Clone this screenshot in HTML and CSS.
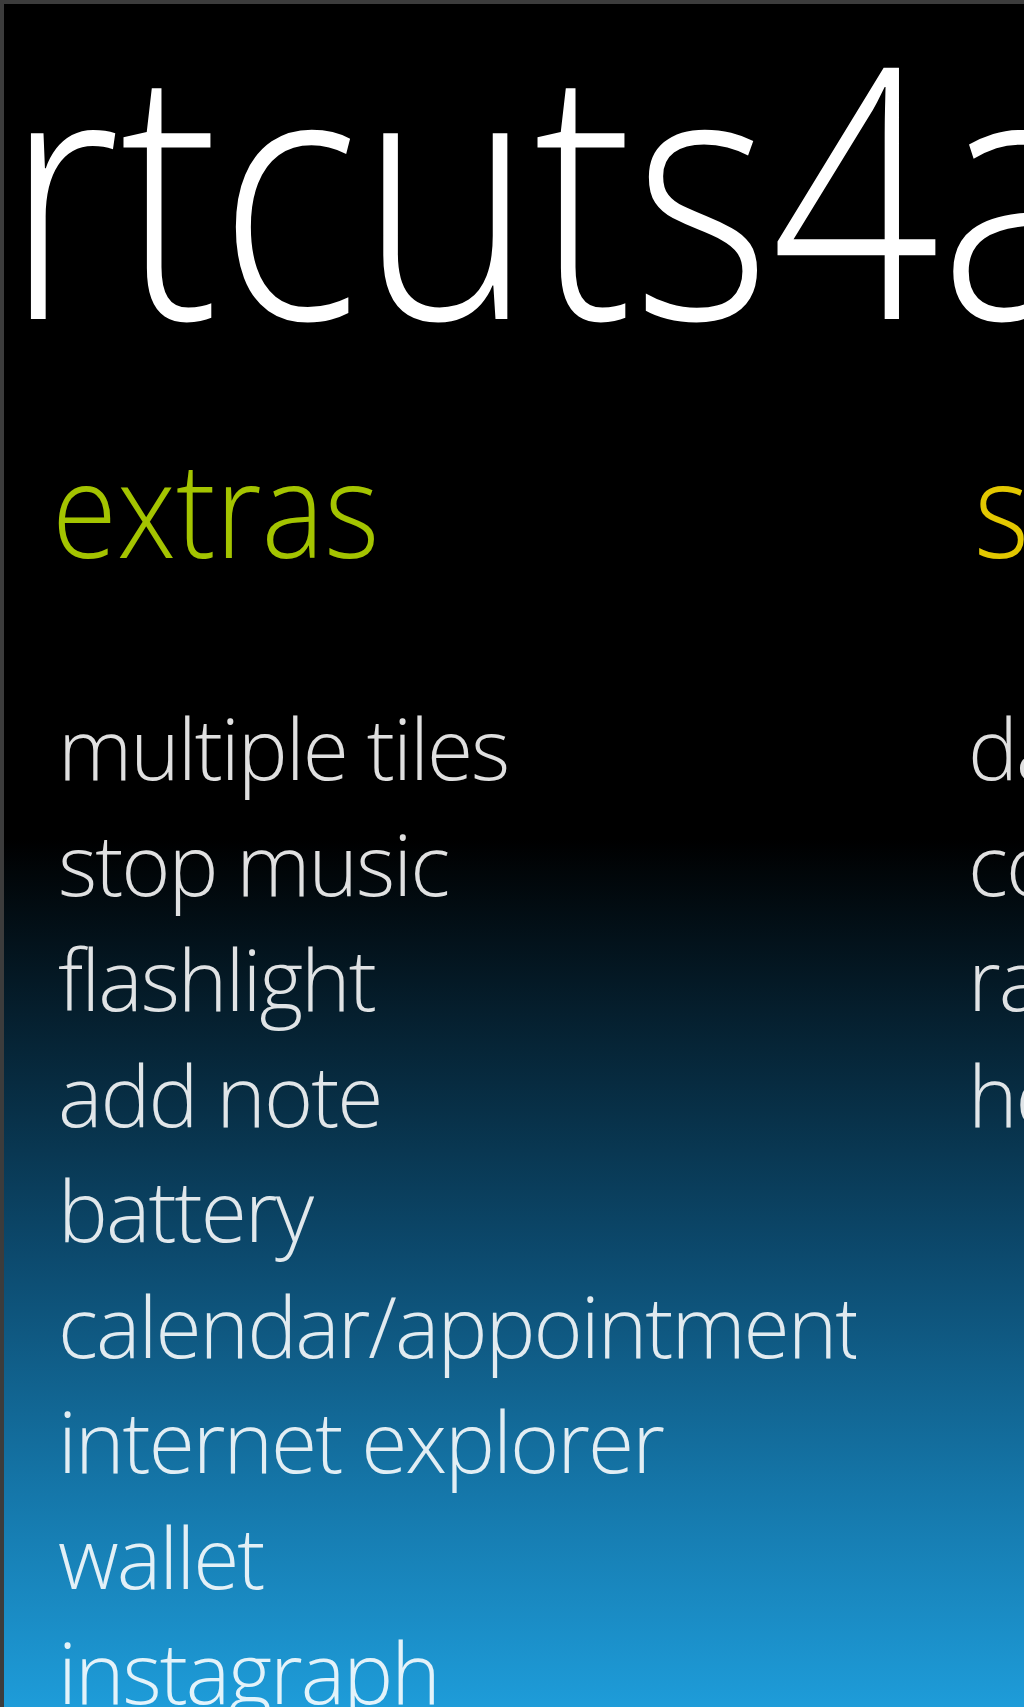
FILE: index.html
```html
<!DOCTYPE html>
<html lang="en">
<head>
<meta charset="utf-8">
<title>shortcuts4all</title>
<link rel="stylesheet" href="styles.css">
</head>
<body>
<div class="screen">
  <h1 class="title">shortcuts4all</h1>
  <div class="panels">
    <section class="panel">
      <h2 class="header lime">extras</h2>
      <ul class="items">
        <li>multiple tiles</li>
        <li>stop music</li>
        <li>flashlight</li>
        <li>add note</li>
        <li>battery</li>
        <li>calendar/appointments</li>
        <li>internet explorer</li>
        <li>wallet</li>
        <li>instagraph</li>
      </ul>
    </section>
    <section class="panel">
      <h2 class="header yellow">settings</h2>
      <ul class="items items-flush">
        <li>data connection</li>
        <li>contacts</li>
        <li>radio</li>
        <li>help</li>
      </ul>
    </section>
  </div>
</div>
</body>
</html>
```

FILE: styles.css
```css
html, body {
  margin: 0;
  padding: 0;
  background: #000;
}

.screen {
  box-sizing: border-box;
  width: 1024px;
  height: 1707px;
  overflow: hidden;
  border-top: 4px solid #3c3c3c;
  border-left: 4px solid #3c3c3c;
  background: linear-gradient(to bottom, #000 0px, #000 835px, #0c4a6e 1253px, #1577aa 1490px, #1e9cd9 1703px);
  font-family: "Open Sans", "Lato", sans-serif;
  color: #fff;
}

.title {
  margin: 5px 0 0 -485px;
  font-size: 350px;
  font-weight: 300;
  line-height: 1;
  white-space: nowrap;
  transform: scaleX(0.845);
  transform-origin: left center;
}

.panels {
  display: flex;
  margin-left: 48px;
  margin-top: 81px;
}

.panel {
  flex: 0 0 922px;
  min-width: 0;
}

.header {
  margin: 0;
  font-size: 133px;
  font-weight: 300;
  line-height: 1;
  white-space: nowrap;
  transform: scaleX(0.89);
  transform-origin: left center;
}

.lime { color: #a4c400; }
.yellow { color: #e3c800; }

.items {
  list-style: none;
  margin: 117px 0 0 6px;
  padding: 0;
  width: 798px;
  overflow: hidden;
}

.items-flush {
  margin-left: -6px;
}

.items li {
  font-size: 84px;
  font-weight: 350;
  letter-spacing: -2px;
  line-height: 115.5px;
  white-space: nowrap;
  color: rgba(255, 255, 255, 0.88);
}
```
